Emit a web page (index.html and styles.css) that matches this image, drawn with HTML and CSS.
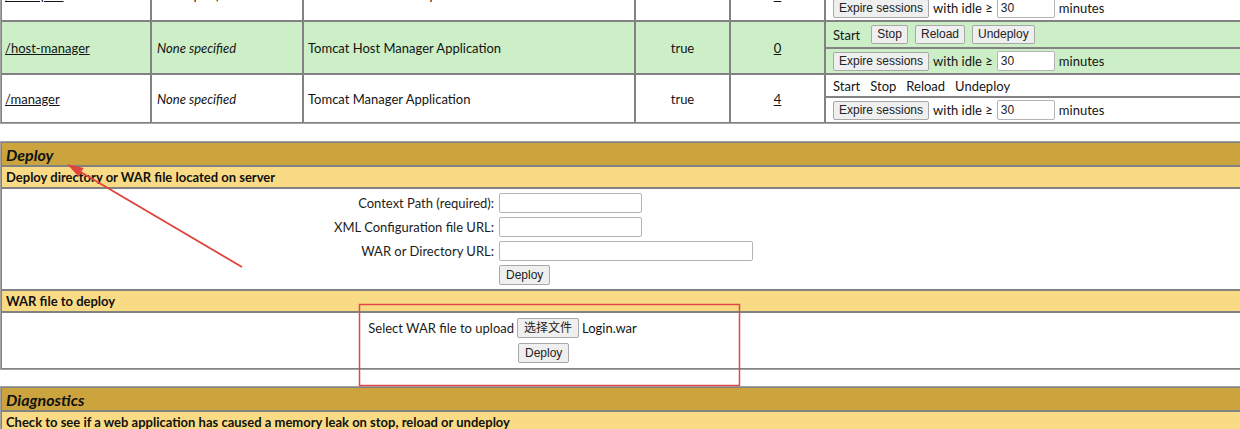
FILE: index.html
```html
<!DOCTYPE html>
<html lang="en">
<head>
<meta charset="utf-8">
<title>Tomcat Web Application Manager</title>
<link rel="stylesheet" href="styles.css">
</head>
<body>
<div class="page">
  <table class="grid apps">
    <tr>
      <td rowspan="2" class="c-path"><a href="#">/examples</a></td>
      <td rowspan="2" class="c-ver"><i>None specified</i></td>
      <td rowspan="2" class="c-name">Servlet and JSP Examples</td>
      <td rowspan="2" class="c-run">true</td>
      <td rowspan="2" class="c-ses"><a href="#">0</a></td>
      <td class="c-cmd cmd-a"><div class="cmds"><span class="start">Start</span><button>Stop</button><button>Reload</button><button>Undeploy</button></div></td>
    </tr>
    <tr>
      <td class="c-cmd cmd-b"><div class="expire"><button>Expire sessions</button><span>with idle ≥</span><input type="text" value="30"><span>minutes</span></div></td>
    </tr>
    <tr class="hl">
      <td rowspan="2" class="c-path"><a href="#">/host-manager</a></td>
      <td rowspan="2" class="c-ver"><i>None specified</i></td>
      <td rowspan="2" class="c-name">Tomcat Host Manager Application</td>
      <td rowspan="2" class="c-run">true</td>
      <td rowspan="2" class="c-ses"><a href="#">0</a></td>
      <td class="c-cmd cmd-a"><div class="cmds"><span class="start">Start</span><button>Stop</button><button>Reload</button><button>Undeploy</button></div></td>
    </tr>
    <tr class="hl">
      <td class="c-cmd cmd-b"><div class="expire"><button>Expire sessions</button><span>with idle ≥</span><input type="text" value="30"><span>minutes</span></div></td>
    </tr>
    <tr>
      <td rowspan="2" class="c-path"><a href="#">/manager</a></td>
      <td rowspan="2" class="c-ver"><i>None specified</i></td>
      <td rowspan="2" class="c-name">Tomcat Manager Application</td>
      <td rowspan="2" class="c-run">true</td>
      <td rowspan="2" class="c-ses"><a href="#">4</a></td>
      <td class="c-cmd cmd-a2"><div class="cmds plain"><span>Start</span><span>Stop</span><span>Reload</span><span>Undeploy</span></div></td>
    </tr>
    <tr>
      <td class="c-cmd cmd-b"><div class="expire"><button>Expire sessions</button><span>with idle ≥</span><input type="text" value="30"><span>minutes</span></div></td>
    </tr>
  </table>

  <table class="grid section deploy">
    <tr><td class="title">Deploy</td></tr>
    <tr><td class="header">Deploy directory or WAR file located on server</td></tr>
    <tr>
      <td class="formcell form-h">
        <div class="form server-form">
          <label class="lbl">Context Path (required):</label><input type="text" class="in-s">
          <label class="lbl">XML Configuration file URL:</label><input type="text" class="in-s">
          <label class="lbl">WAR or Directory URL:</label><input type="text" class="in-l">
          <span></span><button class="submit">Deploy</button>
        </div>
      </td>
    </tr>
    <tr><td class="header">WAR file to deploy</td></tr>
    <tr>
      <td class="formcell upload-h">
        <div class="form upload-form">
          <label class="lbl">Select WAR file to upload</label>
          <div class="file"><button>选择文件</button><span>Login.war</span></div>
          <span></span><button class="submit">Deploy</button>
        </div>
      </td>
    </tr>
  </table>

  <table class="grid section diag">
    <tr><td class="title">Diagnostics</td></tr>
    <tr><td class="header">Check to see if a web application has caused a memory leak on stop, reload or undeploy</td></tr>
    <tr><td class="formcell">&nbsp;</td></tr>
  </table>
</div>

<svg class="annot" width="1240" height="429" viewBox="0 0 1240 429" aria-hidden="true">
  <line x1="242" y1="267" x2="78" y2="170.5" stroke="#e0433b" stroke-width="1.8"/>
  <polygon points="67,164 83.6,168 78.4,176.6" fill="#e0433b"/>
  <rect x="359.5" y="304.5" width="380" height="81" fill="none" stroke="#e34848" stroke-width="1.5"/>
</svg>
</body>
</html>
```

FILE: styles.css
```css
html, body {
  margin: 0;
  padding: 0;
  overflow: hidden;
  background: #ffffff;
}

body {
  position: relative;
  font-family: Lato, "Noto Sans CJK SC", sans-serif;
  font-size: 13px;
  color: #141414;
}

.page {
  width: 1320px;
}

a {
  color: #141414;
  text-decoration: underline;
}

/* generic bordered tables (border=1 cellspacing=0) */
table.grid {
  border-collapse: separate;
  border-spacing: 0;
  border: 1px solid #a3a3a3;
  width: 1320px;
  table-layout: fixed;
}

table.grid td {
  border: 1px solid #828282;
  box-sizing: border-box;
  padding: 0 3px;
}

/* applications table */
.apps {
  margin-top: -33px;
}

.c-path { width: 150px; }
.c-ver  { width: 152px; padding-left: 5px !important; }
.c-name { width: 332px; padding-left: 4px !important; }
.c-run  { width: 95px; text-align: center; }
.c-ses  { width: 95px; text-align: center; }
.c-cmd  { padding-left: 7px !important; }

.apps td { vertical-align: middle; }

.hl td { background: #ccefc7; }

.cmd-a  { height: 27px; }
.cmd-a2 { height: 23px; }
.cmd-b  { height: 26px; }

.cmds {
  display: flex;
  align-items: center;
  gap: 7px;
}

.cmds .start {
  margin-right: 4px;
}

.cmds.plain {
  gap: 10px;
}

.expire {
  display: flex;
  align-items: center;
  gap: 4px;
}

.expire input {
  margin-left: 1px;
  margin-right: 1px;
}

button {
  font-family: "Liberation Sans", Arial, "Noto Sans CJK SC", sans-serif;
  font-size: 12px;
  color: #222;
  background: #efefef;
  border: 1px solid #a8a8a8;
  border-radius: 2px;
  height: 19px;
  padding: 0 5px;
  margin: 0;
  line-height: 17px;
}

input[type="text"] {
  font-family: "Liberation Sans", Arial, sans-serif;
  font-size: 12px;
  color: #222;
  height: 20px;
  box-sizing: border-box;
  border: 1px solid #b4b4b4;
  border-radius: 2px;
  padding: 0 3px;
  margin: 0;
  width: 58px;
  background: #fff;
}

/* section tables */
.deploy { margin-top: 17px; }
.diag   { margin-top: 16px; }

td.title {
  height: 24px;
  background: #cca43d;
  font-weight: bold;
  font-style: italic;
  font-size: 16px;
  padding: 0 4px !important;
  color: #111;
}

td.header {
  height: 22px;
  background: #f9db86;
  font-weight: bold;
  padding: 0 4px !important;
  color: #111;
}

td.formcell {
  padding: 0 !important;
  vertical-align: top;
}

.form-h   { height: 102px; }
.upload-h { height: 57px; }

.form {
  display: grid;
  align-items: center;
}

.lbl {
  text-align: right;
  color: #1c1c1c;
}

.server-form {
  grid-template-columns: 492px max-content;
  column-gap: 5px;
  row-gap: 4px;
  padding-top: 4px;
}

.server-form .in-s { width: 143px; }
.server-form .in-l { width: 254px; }

.submit {
  justify-self: start;
  height: 20px;
  padding: 0 6px;
  font-size: 12px;
}

.upload-form {
  grid-template-columns: 512px max-content;
  column-gap: 3px;
  row-gap: 5px;
  padding-top: 5px;
}

.upload-form .submit {
  margin-left: 1px;
}

.file {
  display: flex;
  align-items: center;
  gap: 3px;
}

.file button {
  height: 20px;
  font-size: 12px;
  padding: 0 6px;
}

/* red annotation drawn over the screenshot */
.annot {
  position: absolute;
  left: 0;
  top: 0;
  pointer-events: none;
}
```
